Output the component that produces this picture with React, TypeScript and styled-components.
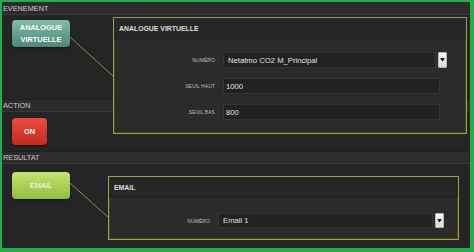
import React from 'react';
import styled, { createGlobalStyle } from 'styled-components';

const Global = createGlobalStyle`
  html, body { margin: 0; padding: 0; background: #252525; }
  body { font-family: "Liberation Sans", Arial, sans-serif; }
  * { box-sizing: border-box; }
`;

const Frame = styled.div`
  width: 474px;
  height: 252px;
  border-style: solid;
  border-color: #1fb04c;
  border-width: 2px 4px 4px 2px;
  background: #252525;
  display: grid;
  grid-template-columns: 106px 1fr;
  grid-template-rows: 13px 84px 13px 39px 13px 1fr;
  overflow: hidden;
`;

const Band = styled.div<{ $row: number }>`
  grid-column: 1 / -1;
  grid-row: ${(p) => p.$row};
  background: #2c2c2c;
  border-top: 1px solid ${(p) => (p.$row === 1 ? '#2c2c2c' : '#1f1f1f')};
  border-bottom: 1px solid #383838;
  color: #c9c9c9;
  font-size: 7.3px;
  padding-left: 1px;
  display: flex;
  align-items: center;
`;

const Side = styled.div<{ $row: number; $top: number }>`
  grid-column: 1;
  grid-row: ${(p) => p.$row};
  position: relative;
  padding: ${(p) => p.$top}px 0 0 10px;
`;

const tones = {
  teal: 'linear-gradient(#80bcaa, #4c8877)',
  red: 'linear-gradient(#ec4b40, #c42920)',
  lime: 'linear-gradient(#c6e272, #90be3c)',
};

const Tile = styled.div<{ $tone: keyof typeof tones; $w: number; $bold?: boolean }>`
  width: ${(p) => p.$w}px;
  height: 27px;
  border-radius: 4px;
  background: ${(p) => tones[p.$tone]};
  color: #fff;
  font-weight: ${(p) => (p.$bold ? 'bold' : 'normal')};
  font-size: 7.4px;
  line-height: 11.5px;
  display: flex;
  flex-direction: column;
  align-items: center;
  justify-content: center;
  text-align: center;
  box-shadow: 0 1px 2px rgba(0, 0, 0, 0.5);
`;

const Connector = styled.svg`
  position: absolute;
  left: 0;
  top: 0;
  overflow: visible;
  pointer-events: none;
`;

const Panel = styled.section<{ $row: string; $mt: number; $ml: number; $mr: number }>`
  grid-column: 2;
  grid-row: ${(p) => p.$row};
  align-self: start;
  margin: ${(p) => p.$mt}px ${(p) => p.$mr}px 0 ${(p) => p.$ml}px;
  border: 1px solid #a3a043;
  box-shadow: inset 0 0 0 1px #46441c;
  background: #2b2b2b;
  z-index: 1;
`;

const PanelHead = styled.header<{ $h: number }>`
  height: ${(p) => p.$h}px;
  background: #272727;
  border-bottom: 1px solid #222;
  color: #dedede;
  font-weight: bold;
  font-size: 6.9px;
  padding-left: 5px;
  display: flex;
  align-items: center;
`;

const PanelBody = styled.div<{ $pt: number; $pb: number }>`
  padding: ${(p) => p.$pt}px 0 ${(p) => p.$pb}px 0;
  display: flex;
  flex-direction: column;
  gap: 10px;
`;

const Row = styled.div<{ $mr: number }>`
  display: grid;
  grid-template-columns: 101px 1fr;
  column-gap: 8px;
  align-items: center;
  margin-right: ${(p) => p.$mr}px;
`;

const Label = styled.label`
  text-align: right;
  font-size: 5.1px;
  color: #bdbdbd;
  text-transform: uppercase;
`;

const Field = styled.div<{ $h: number; $pl: number }>`
  height: ${(p) => p.$h}px;
  background: #222;
  border: 1px solid #343434;
  color: #e2e2e2;
  font-size: 7.7px;
  padding-left: ${(p) => p.$pl}px;
  display: flex;
  align-items: center;
  white-space: nowrap;
  overflow: hidden;
  flex: 1;
`;

const SelectWrap = styled.div`
  display: flex;
  align-items: center;
  gap: 2px;
`;

const DropBtn = styled.div<{ $h: number }>`
  width: 9px;
  height: ${(p) => p.$h}px;
  background: linear-gradient(#fafafa, #d9d9d9);
  border: 1px solid #b5b5b5;
  border-radius: 1px;
  display: flex;
  align-items: center;
  justify-content: center;
`;

const Arrow = () => (
  <svg width="5" height="4" viewBox="0 0 5 4">
    <rect x="0.5" y="0" width="4" height="1" fill="#222" />
    <polygon points="0.5,1 4.5,1 2.5,3.5" fill="#111" />
  </svg>
);

function SelectBox({ value, h }: { value: string; h: number }) {
  return (
    <SelectWrap>
      <Field $h={h} $pl={4}>{value}</Field>
      <DropBtn $h={h}>
        <Arrow />
      </DropBtn>
    </SelectWrap>
  );
}

export default function App() {
  return (
    <>
      <Global />
      <Frame>
        <Band $row={1}>EVENEMENT</Band>
        <Side $row={2} $top={5}>
          <Connector width="1" height="1">
            <line x1="68" y1="22" x2="111" y2="61" stroke="#8f8d39" strokeWidth="1" />
          </Connector>
          <Tile $tone="teal" $w={58} $bold>
            <span>ANALOGUE</span>
            <span>VIRTUELLE</span>
          </Tile>
        </Side>
        <Panel $row="2 / 5" $mt={2} $ml={5} $mr={3}>
          <PanelHead $h={22}>ANALOGUE VIRTUELLE</PanelHead>
          <PanelBody $pt={12} $pb={13}>
            <Row $mr={19}>
              <Label>Numéro</Label>
              <SelectBox value="Netatmo CO2 M_Principal" h={16} />
            </Row>
            <Row $mr={26}>
              <Label>Seuil haut</Label>
              <Field $h={16} $pl={2}>1000</Field>
            </Row>
            <Row $mr={26}>
              <Label>Seuil bas</Label>
              <Field $h={16} $pl={2}>800</Field>
            </Row>
          </PanelBody>
        </Panel>

        <Band $row={3}>ACTION</Band>
        <Side $row={4} $top={6}>
          <Tile $tone="red" $w={35} $bold>
            <span>ON</span>
          </Tile>
        </Side>

        <Band $row={5}>RESULTAT</Band>
        <Side $row={6} $top={8}>
          <Connector width="1" height="1">
            <line x1="68" y1="19" x2="106" y2="53" stroke="#8f8d39" strokeWidth="1" />
          </Connector>
          <Tile $tone="lime" $w={58}>
            <span>EMAIL</span>
          </Tile>
        </Side>
        <Panel $row="6" $mt={12} $ml={0} $mr={11}>
          <PanelHead $h={21}>EMAIL</PanelHead>
          <PanelBody $pt={15} $pb={11}>
            <Row $mr={14}>
              <Label>Numéro</Label>
              <SelectBox value="Email 1" h={15} />
            </Row>
          </PanelBody>
        </Panel>
      </Frame>
    </>
  );
}
